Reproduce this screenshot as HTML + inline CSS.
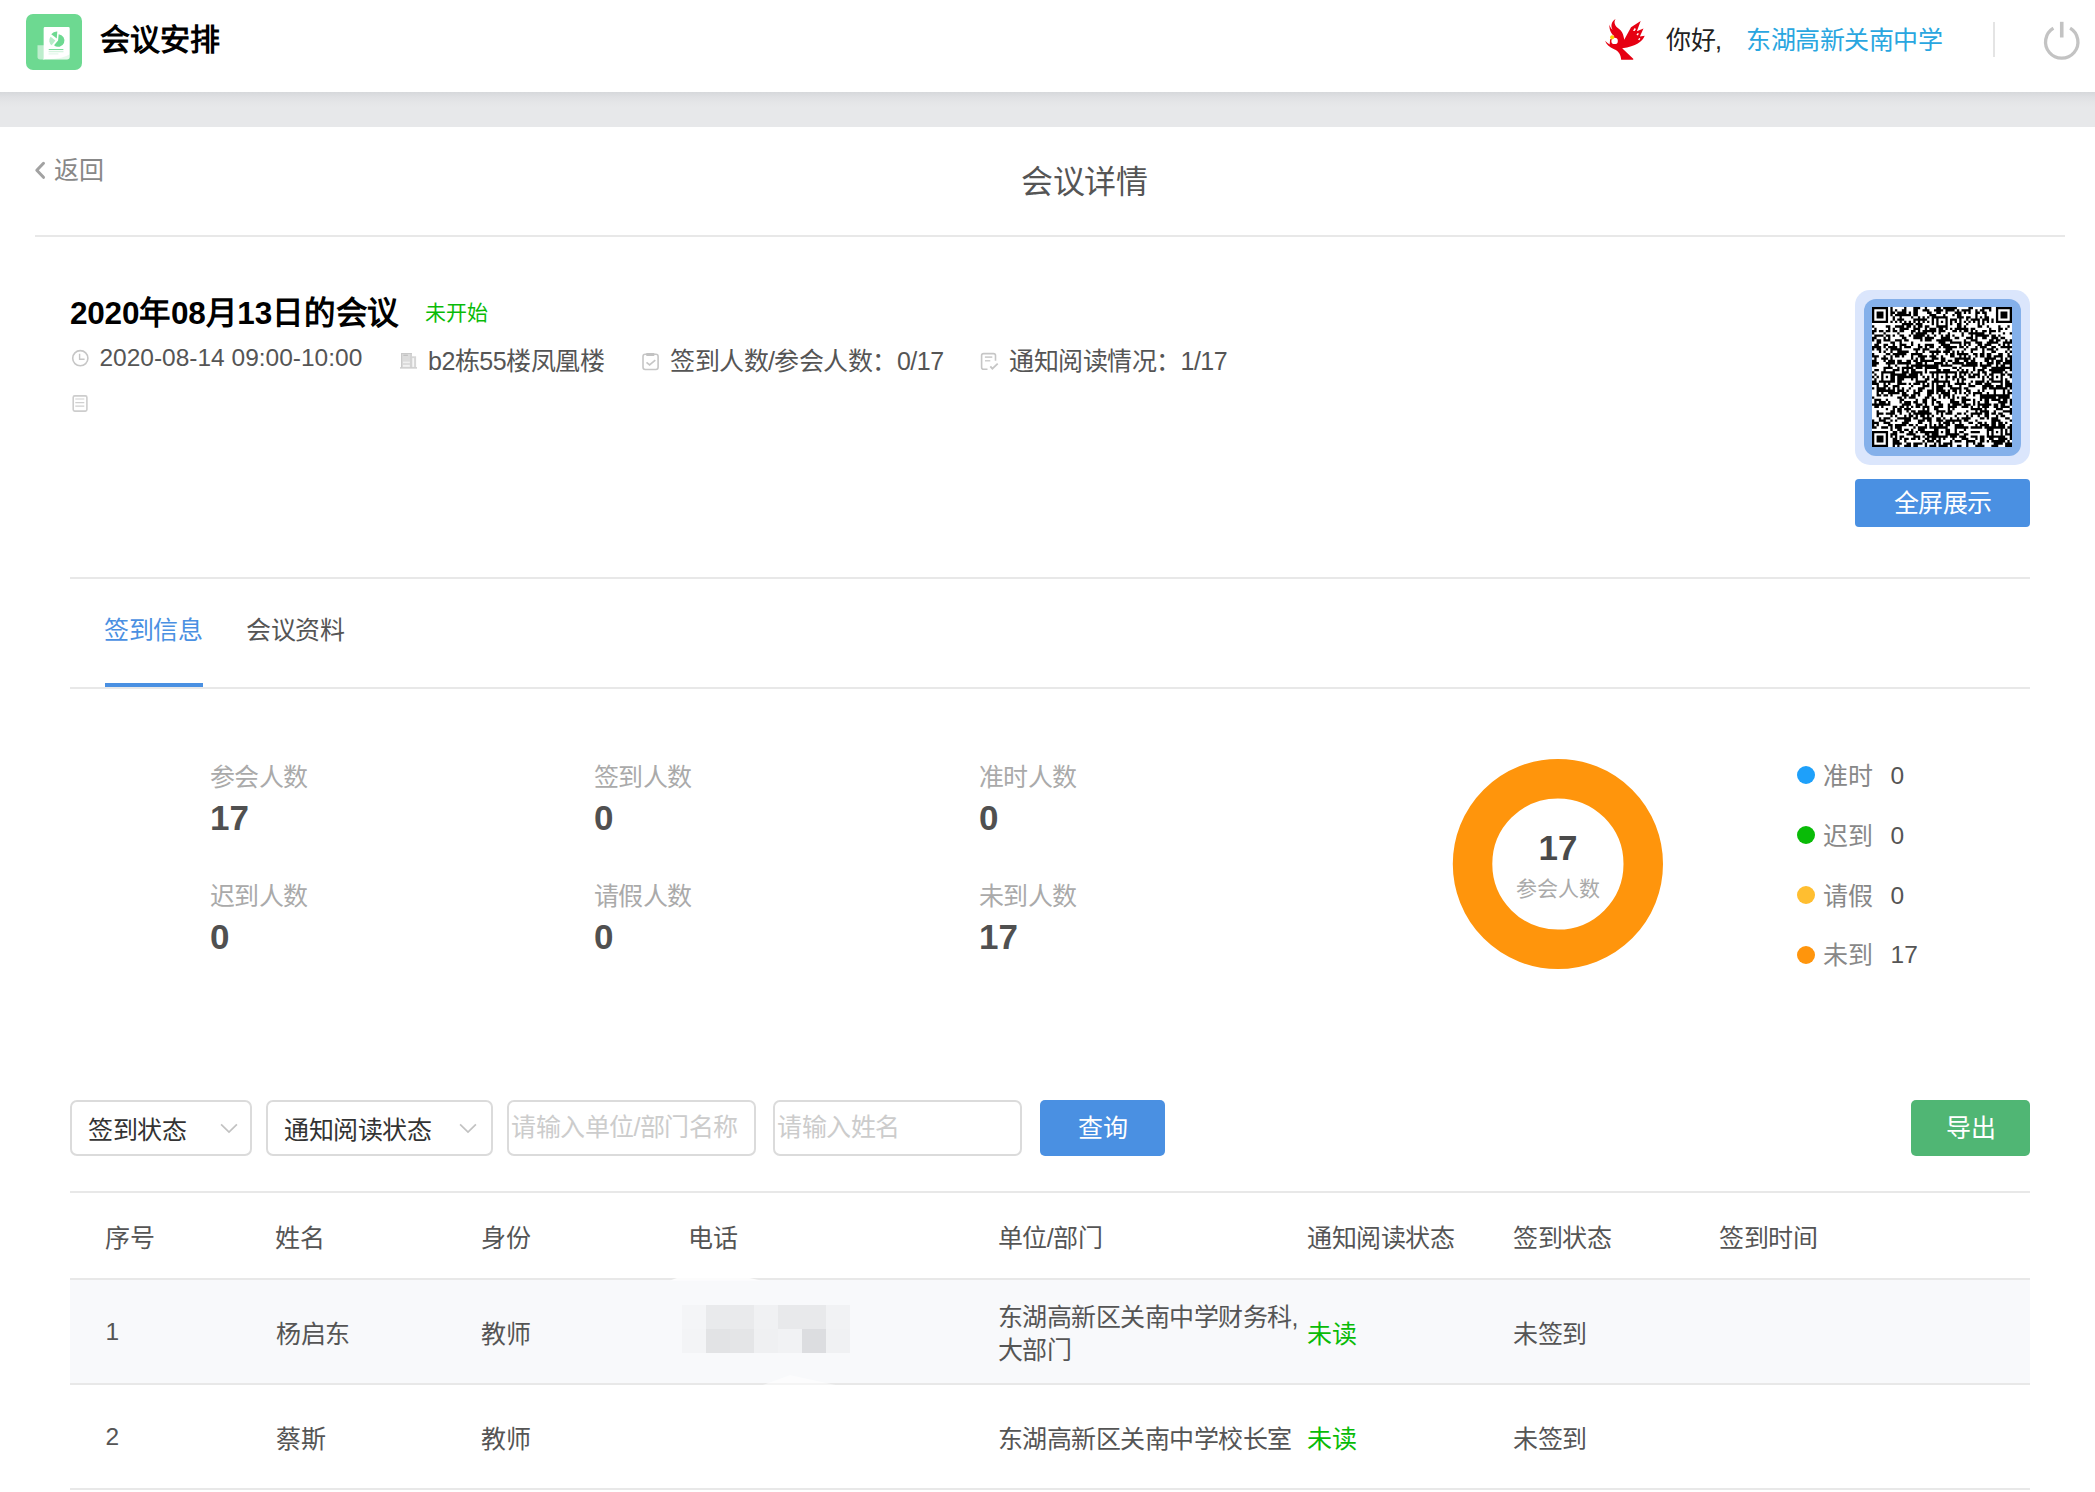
<!DOCTYPE html>
<html lang="zh-CN">
<head>
<meta charset="utf-8">
<title>会议详情</title>
<style>
*{box-sizing:border-box;margin:0;padding:0}
html,body{width:2095px;height:1492px;overflow:hidden;background:#fff}
body{position:relative;font-family:"Liberation Sans",sans-serif;font-size:25px;letter-spacing:-.5px;color:#555;-webkit-font-smoothing:antialiased}
.a{position:absolute;white-space:nowrap}
.t{position:absolute;white-space:nowrap;line-height:32px;height:32px}
.n{font-size:24.5px!important;letter-spacing:0!important}
.hl{position:absolute;height:2px;background:#e8e8e8}
/* header */
#hdr{left:0;top:0;width:2095px;height:92px;background:#fff}
#band{left:0;top:92px;width:2095px;height:35px;background:linear-gradient(#d6d8db 0,#dfe0e3 5px,#e5e6e8 11px,#e7e8ea 16px,#e7e8ea 100%)}
#logo{left:26px;top:14px;width:56px;height:56px;border-radius:7px;background:#6dd991}
#apptitle{left:100px;top:22px;font-size:30px;letter-spacing:0;font-weight:bold;color:#000;line-height:36px;height:36px}
#hello{left:1666px;top:24px;font-size:25px;color:#222}
#school{left:1746px;top:24px;font-size:25px;color:#29a6e0}
#vdiv{left:1993px;top:22px;width:2px;height:35px;background:#e4e4e4}
/* sub header */
#back{left:54px;top:154px;font-size:25px;color:#888}
#ptitle{left:1021px;top:163px;font-size:32px;color:#555;line-height:38px;height:38px}
/* meeting info */
#mtitle{left:70px;top:294px;font-size:31.5px;letter-spacing:-.22px;font-weight:bold;color:#000;line-height:38px;height:38px}
#mstatus{left:425px;top:297px;font-size:21px;letter-spacing:0;color:#09bb07}
.info{color:#555;font-size:25px}
/* tabs */
.tab{font-size:25px}
/* stats */
.sl{color:#aaa;font-size:25px}
.sn{color:#505050;font-size:35px;letter-spacing:0;font-weight:bold;line-height:40px;height:40px}
/* legend */
.dot{position:absolute;width:18px;height:18px;border-radius:50%}
.lg{color:#888;font-size:25px}
.ln{color:#555;font-size:25px}
/* filters */
.sel,.inp{position:absolute;top:1100px;height:56px;border:2px solid #dbdbdb;border-radius:7px;background:#fff}
.btn{position:absolute;color:#fff;font-size:25px;text-align:center;border-radius:5px}
/* table */
.th{color:#555;font-size:25px}
.td{color:#555;font-size:25px}
.g{color:#09bb07}
</style>
</head>
<body>
<!-- HEADER -->
<div class="a" id="hdr"></div>
<div class="a" id="band"></div>
<div class="a" id="logo">
<svg width="56" height="56" viewBox="0 0 56 56">
<path d="M11.500 31.300h7v14.200h-4.300a2.700 2.700 0 0 1-2.700-2.700z" fill="#fff" fill-opacity=".55"/>
<path d="M19 13h23.300a1.400 1.400 0 0 1 1.400 1.400V42.800a2.700 2.700 0 0 1-2.700 2.700H16.500c.8-.2 1.150-.7 1.150-1.800V14.400A1.400 1.400 0 0 1 19 13z" fill="#fff"/>
<path d="M43.700 40.200V42.800a2.700 2.700 0 0 1-2.700 2.700H17c12-.3 21-1.700 26.700-5.300z" fill="#6dd991" fill-opacity=".16"/>
<path d="M32.10 26.50L32.65 20.17A6.35 6.35 0 1 1 28.02 31.36Z" fill="#6dd991"/>
<path d="M30.80 24.60L25.28 20.29A7.0 7.0 0 0 1 31.29 17.62Z" fill="#6dd991"/>
<path d="M29.40 26.50L25.64 31.31A6.1 6.1 0 0 1 24.59 22.74Z" fill="#6dd991" fill-opacity=".5"/>
<rect x="22.600" y="34.900" width="14.900" height="1.200" rx=".6" fill="#6dd991" fill-opacity=".9"/>
<rect x="22.600" y="36.800" width="14.900" height="1.500" fill="#6dd991" fill-opacity=".28"/>
<rect x="22.600" y="39.100" width="9.800" height="1.500" fill="#6dd991" fill-opacity=".15"/>
</svg>
</div>
<div class="t" id="apptitle">会议安排</div>
<svg class="a" style="left:1590px;top:10px" width="80" height="60" viewBox="0 0 1989 1492">
<path fill="#e60012" d="M635 225C585 300 615 390 700 455C790 520 835 600 850 740L1020 430L1260 275L1165 530L1330 460L1240 660L1360 640C1300 790 1150 905 800 950L1075 1215V1240H775C770 1120 720 1020 600 975C480 930 400 850 375 765C420 810 455 840 488 858L500 735L605 650C540 600 480 520 480 360C500 420 520 460 560 490C510 400 530 290 635 225Z"/>
<circle cx="612" cy="768" r="80" fill="#fff"/>
<circle cx="552" cy="680" r="52" fill="#ffd200"/>
<path fill="#fff" d="M1112 448L1142 470L1112 522L1068 515ZM1190 570L1216 590L1186 636L1154 610ZM1226 694L1252 710L1226 752L1194 735Z"/>
</svg>
<div class="t" id="hello">你好,</div>
<div class="t" id="school">东湖高新关南中学</div>
<div class="a" id="vdiv"></div>
<svg class="a" style="left:2040px;top:18px" width="44" height="44" viewBox="0 0 44 44" fill="none" stroke="#c3c3c3">
<path d="M30.100 10.100A16.200 16.200 0 1 1 13.400 10.100" stroke-width="3.300"/>
<path d="M21.750 3.800V19.500" stroke-width="3.600"/>
</svg>

<!-- SUBHEADER -->
<svg class="a" style="left:30px;top:156px" width="20" height="28" viewBox="30 156 20 28" fill="none" stroke="#a2a2a2" stroke-width="3" stroke-linecap="round" stroke-linejoin="round"><path d="M43.500 163.300L36.800 170.300L43.500 177.300"/></svg>
<div class="t" id="back">返回</div>
<div class="t" id="ptitle">会议详情</div>
<div class="hl" style="left:35px;top:235px;width:2030px"></div>

<!-- MEETING INFO -->
<div class="t" id="mtitle">2020年08月13日的会议</div>
<div class="t" id="mstatus">未开始</div>
<svg class="a" style="left:60px;top:340px" width="960" height="80" viewBox="60 340 960 80" fill="none" stroke="#c6c6c6" stroke-width="1.600">
<circle cx="80.300" cy="358.200" r="7.600"/>
<path d="M79.600 353.800V359.300H84.600" stroke-width="1.400"/>
<g stroke="none" fill="#c9c9c9">
<rect x="401" y="353" width="10.700" height="14.300" fill="#dcdcdc"/>
<rect x="401" y="353" width="1.200" height="14.300"/>
<rect x="410.500" y="353" width="1.200" height="14.300"/>
<rect x="401" y="353" width="10.700" height="1"/>
<rect x="403.300" y="354.700" width="4.600" height="1.100" fill="#bbb"/>
<rect x="403" y="361.700" width="6.800" height="1.100" fill="#f4f4f4"/>
<rect x="403" y="365.100" width="6.800" height="1.600" fill="#f4f4f4"/>
<rect x="411.700" y="356.300" width="4.400" height="11" fill="#d6d6d6"/>
<rect x="412.300" y="358.100" width="1.800" height="8.800" fill="#f6f6f6"/>
<rect x="400" y="367.300" width="17" height="1.200" fill="#c2c2c2"/>
</g>
<rect x="643" y="354.200" width="15.100" height="15.300" rx="2.200"/>
<path d="M646.300 354.500H654.300" stroke-width="3" stroke="#c2c2c2"/>
<path d="M646.500 362.300L649.600 364.800L655.300 360.200" stroke-width="1.700"/>
<path d="M995.500 360.700V355.600A2 2 0 0 0 993.500 353.600H983.600A2 2 0 0 0 981.600 355.600V367.300A2 2 0 0 0 983.600 369.300H987.500"/>
<path d="M984.900 357.100H992.300M985 360.700H990.300" stroke="#d0d0d0"/>
<path d="M990.300 366.300L992.400 368.600L997.700 363.700" stroke-width="1.800"/>
<rect x="73.200" y="395.900" width="13.700" height="15.200" rx="1.500" stroke="#cdcdcd"/>
<path d="M75.300 399H84.300M75.300 402.600H84.300M75.300 406.100H84.300" stroke-width="1.100" stroke="#d0d0d0"/>
</svg>
<div class="t info n" style="left:99.400px;top:342px">2020-08-14 09:00-10:00</div>
<div class="t info" style="left:428px;top:345px">b2栋55楼凤凰楼</div>
<div class="t info" style="left:670px;top:345px">签到人数/参会人数：0/17</div>
<div class="t info" style="left:1009px;top:345px">通知阅读情况：1/17</div>
<div class="a" style="left:1855px;top:290px;width:175px;height:175px;border-radius:15px;background:#dbe6fc"></div>
<div class="a" style="left:1864px;top:299px;width:157px;height:157px;border-radius:12px;background:#84b0ea"></div>
<svg class="a" style="left:1872px;top:307px;background:#fff" width="140" height="140" viewBox="0 0 61 61"><path fill="#000" d="M0 0h7v1h-7zM8 0h1v1h-1zM14 0h1v1h-1zM18 0h3v1h-3zM23 0h1v1h-1zM28 0h2v1h-2zM31 0h6v1h-6zM42 0h2v1h-2zM48 0h4v1h-4zM54 0h7v1h-7zM0 1h1v1h-1zM6 1h1v1h-1zM8 1h1v1h-1zM10 1h1v1h-1zM13 1h2v1h-2zM18 1h2v1h-2zM22 1h3v1h-3zM27 1h4v1h-4zM32 1h4v1h-4zM37 1h1v1h-1zM39 1h4v1h-4zM45 1h1v1h-1zM47 1h2v1h-2zM51 1h1v1h-1zM54 1h1v1h-1zM60 1h1v1h-1zM0 2h1v1h-1zM2 2h3v1h-3zM6 2h1v1h-1zM8 2h2v1h-2zM11 2h4v1h-4zM16 2h1v1h-1zM18 2h2v1h-2zM24 2h2v1h-2zM28 2h2v1h-2zM32 2h1v1h-1zM36 2h3v1h-3zM40 2h1v1h-1zM42 2h1v1h-1zM45 2h2v1h-2zM48 2h2v1h-2zM54 2h1v1h-1zM56 2h3v1h-3zM60 2h1v1h-1zM0 3h1v1h-1zM2 3h3v1h-3zM6 3h1v1h-1zM8 3h1v1h-1zM10 3h7v1h-7zM18 3h2v1h-2zM25 3h3v1h-3zM31 3h1v1h-1zM35 3h1v1h-1zM37 3h2v1h-2zM45 3h1v1h-1zM49 3h1v1h-1zM54 3h1v1h-1zM56 3h3v1h-3zM60 3h1v1h-1zM0 4h1v1h-1zM2 4h3v1h-3zM6 4h1v1h-1zM9 4h1v1h-1zM12 4h1v1h-1zM17 4h1v1h-1zM20 4h1v1h-1zM22 4h1v1h-1zM24 4h1v1h-1zM26 4h7v1h-7zM37 4h3v1h-3zM41 4h2v1h-2zM45 4h1v1h-1zM47 4h1v1h-1zM49 4h2v1h-2zM54 4h1v1h-1zM56 4h3v1h-3zM60 4h1v1h-1zM0 5h1v1h-1zM6 5h1v1h-1zM9 5h1v1h-1zM11 5h3v1h-3zM18 5h6v1h-6zM26 5h1v1h-1zM28 5h1v1h-1zM32 5h1v1h-1zM34 5h3v1h-3zM38 5h1v1h-1zM41 5h1v1h-1zM43 5h4v1h-4zM48 5h3v1h-3zM52 5h1v1h-1zM54 5h1v1h-1zM60 5h1v1h-1zM0 6h7v1h-7zM8 6h1v1h-1zM10 6h1v1h-1zM12 6h1v1h-1zM14 6h1v1h-1zM16 6h1v1h-1zM18 6h1v1h-1zM20 6h1v1h-1zM22 6h1v1h-1zM24 6h1v1h-1zM26 6h1v1h-1zM28 6h1v1h-1zM30 6h1v1h-1zM32 6h1v1h-1zM34 6h1v1h-1zM36 6h1v1h-1zM38 6h1v1h-1zM40 6h1v1h-1zM42 6h1v1h-1zM44 6h1v1h-1zM46 6h1v1h-1zM48 6h1v1h-1zM50 6h1v1h-1zM52 6h1v1h-1zM54 6h7v1h-7zM13 7h5v1h-5zM19 7h3v1h-3zM26 7h1v1h-1zM28 7h1v1h-1zM32 7h1v1h-1zM34 7h1v1h-1zM37 7h2v1h-2zM41 7h1v1h-1zM46 7h1v1h-1zM48 7h1v1h-1zM0 8h1v1h-1zM6 8h2v1h-2zM10 8h4v1h-4zM15 8h2v1h-2zM18 8h1v1h-1zM20 8h2v1h-2zM23 8h2v1h-2zM28 8h5v1h-5zM37 8h2v1h-2zM40 8h1v1h-1zM46 8h2v1h-2zM50 8h1v1h-1zM55 8h1v1h-1zM59 8h1v1h-1zM1 9h1v1h-1zM7 9h1v1h-1zM9 9h1v1h-1zM12 9h4v1h-4zM18 9h3v1h-3zM23 9h1v1h-1zM25 9h3v1h-3zM29 9h2v1h-2zM32 9h1v1h-1zM34 9h1v1h-1zM36 9h6v1h-6zM43 9h2v1h-2zM51 9h1v1h-1zM55 9h2v1h-2zM58 9h1v1h-1zM0 10h2v1h-2zM3 10h2v1h-2zM6 10h2v1h-2zM9 10h2v1h-2zM12 10h2v1h-2zM17 10h2v1h-2zM20 10h1v1h-1zM22 10h6v1h-6zM29 10h3v1h-3zM35 10h2v1h-2zM38 10h1v1h-1zM40 10h2v1h-2zM43 10h1v1h-1zM45 10h1v1h-1zM48 10h2v1h-2zM51 10h3v1h-3zM55 10h1v1h-1zM0 11h1v1h-1zM5 11h1v1h-1zM11 11h1v1h-1zM17 11h1v1h-1zM19 11h5v1h-5zM26 11h1v1h-1zM29 11h1v1h-1zM33 11h1v1h-1zM39 11h1v1h-1zM42 11h7v1h-7zM51 11h1v1h-1zM57 11h1v1h-1zM60 11h1v1h-1zM1 12h4v1h-4zM6 12h2v1h-2zM9 12h1v1h-1zM12 12h2v1h-2zM16 12h1v1h-1zM18 12h5v1h-5zM24 12h1v1h-1zM27 12h1v1h-1zM30 12h1v1h-1zM32 12h2v1h-2zM35 12h1v1h-1zM39 12h1v1h-1zM43 12h1v1h-1zM45 12h6v1h-6zM52 12h2v1h-2zM55 12h1v1h-1zM0 13h2v1h-2zM5 13h1v1h-1zM7 13h1v1h-1zM13 13h2v1h-2zM18 13h4v1h-4zM23 13h4v1h-4zM30 13h4v1h-4zM36 13h2v1h-2zM41 13h3v1h-3zM45 13h1v1h-1zM48 13h2v1h-2zM52 13h3v1h-3zM56 13h2v1h-2zM0 14h1v1h-1zM2 14h2v1h-2zM5 14h3v1h-3zM10 14h3v1h-3zM14 14h2v1h-2zM21 14h1v1h-1zM23 14h3v1h-3zM28 14h7v1h-7zM40 14h1v1h-1zM43 14h3v1h-3zM51 14h2v1h-2zM54 14h2v1h-2zM58 14h1v1h-1zM60 14h1v1h-1zM2 15h2v1h-2zM8 15h2v1h-2zM12 15h1v1h-1zM17 15h1v1h-1zM29 15h3v1h-3zM34 15h5v1h-5zM40 15h3v1h-3zM45 15h3v1h-3zM50 15h5v1h-5zM57 15h4v1h-4zM1 16h2v1h-2zM5 16h2v1h-2zM9 16h1v1h-1zM12 16h3v1h-3zM17 16h1v1h-1zM20 16h1v1h-1zM23 16h4v1h-4zM30 16h4v1h-4zM38 16h1v1h-1zM40 16h1v1h-1zM42 16h1v1h-1zM46 16h2v1h-2zM49 16h3v1h-3zM55 16h1v1h-1zM57 16h1v1h-1zM59 16h1v1h-1zM0 17h4v1h-4zM5 17h1v1h-1zM7 17h4v1h-4zM12 17h1v1h-1zM14 17h3v1h-3zM20 17h2v1h-2zM23 17h1v1h-1zM25 17h2v1h-2zM29 17h1v1h-1zM31 17h6v1h-6zM38 17h2v1h-2zM41 17h1v1h-1zM45 17h1v1h-1zM47 17h3v1h-3zM52 17h2v1h-2zM56 17h5v1h-5zM0 18h1v1h-1zM2 18h2v1h-2zM6 18h1v1h-1zM8 18h5v1h-5zM18 18h3v1h-3zM22 18h3v1h-3zM28 18h1v1h-1zM32 18h3v1h-3zM40 18h1v1h-1zM43 18h3v1h-3zM48 18h1v1h-1zM50 18h3v1h-3zM54 18h1v1h-1zM59 18h1v1h-1zM3 19h1v1h-1zM5 19h1v1h-1zM8 19h1v1h-1zM11 19h5v1h-5zM19 19h1v1h-1zM22 19h1v1h-1zM25 19h5v1h-5zM31 19h3v1h-3zM35 19h1v1h-1zM37 19h1v1h-1zM39 19h1v1h-1zM43 19h1v1h-1zM48 19h1v1h-1zM52 19h2v1h-2zM58 19h1v1h-1zM60 19h1v1h-1zM0 20h1v1h-1zM6 20h2v1h-2zM9 20h6v1h-6zM17 20h5v1h-5zM26 20h1v1h-1zM28 20h1v1h-1zM32 20h1v1h-1zM34 20h2v1h-2zM37 20h5v1h-5zM44 20h2v1h-2zM47 20h2v1h-2zM50 20h2v1h-2zM55 20h2v1h-2zM59 20h1v1h-1zM0 21h3v1h-3zM5 21h1v1h-1zM8 21h1v1h-1zM10 21h2v1h-2zM13 21h1v1h-1zM17 21h1v1h-1zM20 21h4v1h-4zM25 21h3v1h-3zM30 21h1v1h-1zM34 21h2v1h-2zM38 21h1v1h-1zM40 21h1v1h-1zM42 21h1v1h-1zM45 21h1v1h-1zM47 21h2v1h-2zM50 21h2v1h-2zM53 21h4v1h-4zM59 21h2v1h-2zM1 22h1v1h-1zM4 22h3v1h-3zM8 22h1v1h-1zM17 22h1v1h-1zM19 22h1v1h-1zM21 22h2v1h-2zM26 22h3v1h-3zM30 22h2v1h-2zM36 22h7v1h-7zM44 22h1v1h-1zM49 22h5v1h-5zM56 22h1v1h-1zM58 22h1v1h-1zM60 22h1v1h-1zM0 23h2v1h-2zM5 23h1v1h-1zM7 23h3v1h-3zM11 23h2v1h-2zM15 23h2v1h-2zM18 23h2v1h-2zM21 23h6v1h-6zM30 23h2v1h-2zM33 23h2v1h-2zM36 23h2v1h-2zM40 23h2v1h-2zM43 23h2v1h-2zM49 23h2v1h-2zM52 23h1v1h-1zM54 23h3v1h-3zM58 23h3v1h-3zM0 24h3v1h-3zM6 24h4v1h-4zM11 24h6v1h-6zM19 24h3v1h-3zM23 24h1v1h-1zM27 24h4v1h-4zM32 24h1v1h-1zM35 24h5v1h-5zM41 24h5v1h-5zM47 24h1v1h-1zM50 24h3v1h-3zM54 24h2v1h-2zM57 24h4v1h-4zM0 25h2v1h-2zM7 25h1v1h-1zM10 25h1v1h-1zM15 25h1v1h-1zM17 25h12v1h-12zM30 25h5v1h-5zM39 25h7v1h-7zM47 25h5v1h-5zM54 25h1v1h-1zM56 25h2v1h-2zM60 25h1v1h-1zM5 26h4v1h-4zM11 26h1v1h-1zM13 26h5v1h-5zM19 26h3v1h-3zM23 26h6v1h-6zM35 26h2v1h-2zM38 26h1v1h-1zM44 26h1v1h-1zM48 26h2v1h-2zM52 26h9v1h-9zM1 27h2v1h-2zM5 27h1v1h-1zM9 27h3v1h-3zM13 27h1v1h-1zM15 27h1v1h-1zM17 27h2v1h-2zM23 27h1v1h-1zM28 27h2v1h-2zM31 27h3v1h-3zM37 27h1v1h-1zM39 27h1v1h-1zM41 27h1v1h-1zM44 27h1v1h-1zM46 27h3v1h-3zM51 27h7v1h-7zM60 27h1v1h-1zM0 28h1v1h-1zM4 28h6v1h-6zM13 28h3v1h-3zM17 28h5v1h-5zM23 28h1v1h-1zM25 28h12v1h-12zM38 28h4v1h-4zM43 28h1v1h-1zM46 28h1v1h-1zM48 28h2v1h-2zM52 28h5v1h-5zM58 28h1v1h-1zM1 29h1v1h-1zM4 29h1v1h-1zM8 29h7v1h-7zM16 29h4v1h-4zM21 29h1v1h-1zM26 29h1v1h-1zM28 29h1v1h-1zM32 29h1v1h-1zM36 29h1v1h-1zM38 29h1v1h-1zM40 29h1v1h-1zM42 29h1v1h-1zM44 29h3v1h-3zM49 29h1v1h-1zM51 29h2v1h-2zM56 29h2v1h-2zM59 29h2v1h-2zM0 30h1v1h-1zM2 30h1v1h-1zM4 30h1v1h-1zM6 30h1v1h-1zM8 30h2v1h-2zM11 30h9v1h-9zM22 30h1v1h-1zM24 30h1v1h-1zM26 30h1v1h-1zM28 30h1v1h-1zM30 30h1v1h-1zM32 30h2v1h-2zM35 30h2v1h-2zM38 30h2v1h-2zM42 30h3v1h-3zM46 30h1v1h-1zM48 30h1v1h-1zM50 30h1v1h-1zM52 30h1v1h-1zM54 30h1v1h-1zM56 30h1v1h-1zM60 30h1v1h-1zM1 31h1v1h-1zM4 31h1v1h-1zM8 31h2v1h-2zM11 31h3v1h-3zM17 31h1v1h-1zM19 31h1v1h-1zM23 31h2v1h-2zM27 31h2v1h-2zM32 31h1v1h-1zM35 31h1v1h-1zM37 31h1v1h-1zM39 31h2v1h-2zM48 31h1v1h-1zM51 31h2v1h-2zM56 31h1v1h-1zM58 31h1v1h-1zM0 32h2v1h-2zM3 32h7v1h-7zM11 32h2v1h-2zM19 32h5v1h-5zM26 32h8v1h-8zM37 32h1v1h-1zM39 32h1v1h-1zM43 32h1v1h-1zM45 32h4v1h-4zM50 32h1v1h-1zM52 32h5v1h-5zM58 32h2v1h-2zM0 33h3v1h-3zM5 33h1v1h-1zM7 33h1v1h-1zM11 33h4v1h-4zM16 33h1v1h-1zM18 33h3v1h-3zM22 33h1v1h-1zM24 33h1v1h-1zM26 33h1v1h-1zM28 33h1v1h-1zM31 33h1v1h-1zM33 33h1v1h-1zM36 33h5v1h-5zM42 33h1v1h-1zM45 33h3v1h-3zM49 33h3v1h-3zM56 33h1v1h-1zM58 33h3v1h-3zM2 34h1v1h-1zM5 34h2v1h-2zM9 34h3v1h-3zM17 34h1v1h-1zM22 34h3v1h-3zM26 34h1v1h-1zM28 34h4v1h-4zM33 34h2v1h-2zM38 34h1v1h-1zM42 34h3v1h-3zM48 34h5v1h-5zM54 34h3v1h-3zM58 34h3v1h-3zM0 35h1v1h-1zM2 35h4v1h-4zM7 35h1v1h-1zM9 35h1v1h-1zM11 35h1v1h-1zM13 35h1v1h-1zM16 35h1v1h-1zM20 35h3v1h-3zM26 35h1v1h-1zM28 35h3v1h-3zM34 35h5v1h-5zM40 35h2v1h-2zM48 35h2v1h-2zM51 35h8v1h-8zM60 35h1v1h-1zM2 36h8v1h-8zM11 36h3v1h-3zM15 36h1v1h-1zM18 36h1v1h-1zM20 36h2v1h-2zM24 36h3v1h-3zM28 36h4v1h-4zM33 36h1v1h-1zM35 36h2v1h-2zM38 36h1v1h-1zM41 36h2v1h-2zM46 36h1v1h-1zM48 36h1v1h-1zM53 36h1v1h-1zM57 36h1v1h-1zM59 36h1v1h-1zM2 37h1v1h-1zM4 37h1v1h-1zM7 37h5v1h-5zM13 37h2v1h-2zM18 37h3v1h-3zM24 37h3v1h-3zM28 37h1v1h-1zM30 37h4v1h-4zM36 37h1v1h-1zM38 37h1v1h-1zM40 37h1v1h-1zM42 37h1v1h-1zM44 37h4v1h-4zM50 37h1v1h-1zM53 37h1v1h-1zM57 37h1v1h-1zM59 37h2v1h-2zM2 38h2v1h-2zM5 38h2v1h-2zM8 38h1v1h-1zM13 38h3v1h-3zM17 38h2v1h-2zM20 38h1v1h-1zM24 38h2v1h-2zM29 38h1v1h-1zM31 38h3v1h-3zM35 38h1v1h-1zM41 38h1v1h-1zM44 38h1v1h-1zM47 38h13v1h-13zM0 39h1v1h-1zM11 39h2v1h-2zM14 39h1v1h-1zM16 39h3v1h-3zM23 39h2v1h-2zM26 39h1v1h-1zM29 39h1v1h-1zM31 39h1v1h-1zM33 39h1v1h-1zM35 39h1v1h-1zM37 39h1v1h-1zM39 39h2v1h-2zM47 39h7v1h-7zM55 39h5v1h-5zM1 40h3v1h-3zM6 40h1v1h-1zM12 40h2v1h-2zM19 40h1v1h-1zM22 40h2v1h-2zM26 40h2v1h-2zM34 40h2v1h-2zM39 40h4v1h-4zM44 40h1v1h-1zM47 40h1v1h-1zM49 40h2v1h-2zM52 40h4v1h-4zM57 40h2v1h-2zM60 40h1v1h-1zM1 41h1v1h-1zM3 41h3v1h-3zM7 41h1v1h-1zM12 41h1v1h-1zM14 41h3v1h-3zM18 41h2v1h-2zM22 41h2v1h-2zM26 41h1v1h-1zM28 41h2v1h-2zM34 41h4v1h-4zM39 41h2v1h-2zM44 41h1v1h-1zM46 41h1v1h-1zM49 41h2v1h-2zM55 41h4v1h-4zM60 41h1v1h-1zM0 42h8v1h-8zM13 42h4v1h-4zM19 42h3v1h-3zM23 42h1v1h-1zM26 42h1v1h-1zM29 42h2v1h-2zM33 42h1v1h-1zM35 42h4v1h-4zM40 42h3v1h-3zM44 42h1v1h-1zM46 42h6v1h-6zM53 42h2v1h-2zM56 42h2v1h-2zM60 42h1v1h-1zM1 43h2v1h-2zM4 43h1v1h-1zM9 43h2v1h-2zM12 43h2v1h-2zM15 43h1v1h-1zM17 43h1v1h-1zM19 43h2v1h-2zM22 43h3v1h-3zM27 43h4v1h-4zM33 43h4v1h-4zM39 43h3v1h-3zM43 43h1v1h-1zM46 43h1v1h-1zM48 43h3v1h-3zM53 43h2v1h-2zM56 43h4v1h-4zM6 44h1v1h-1zM9 44h1v1h-1zM11 44h2v1h-2zM14 44h3v1h-3zM22 44h1v1h-1zM24 44h1v1h-1zM27 44h2v1h-2zM33 44h1v1h-1zM35 44h1v1h-1zM43 44h5v1h-5zM49 44h1v1h-1zM54 44h3v1h-3zM60 44h1v1h-1zM2 45h1v1h-1zM8 45h2v1h-2zM11 45h2v1h-2zM15 45h1v1h-1zM17 45h2v1h-2zM20 45h5v1h-5zM28 45h4v1h-4zM33 45h2v1h-2zM41 45h1v1h-1zM45 45h1v1h-1zM47 45h4v1h-4zM53 45h1v1h-1zM57 45h4v1h-4zM2 46h3v1h-3zM6 46h4v1h-4zM12 46h1v1h-1zM16 46h1v1h-1zM18 46h8v1h-8zM28 46h1v1h-1zM30 46h1v1h-1zM32 46h3v1h-3zM37 46h2v1h-2zM40 46h1v1h-1zM43 46h5v1h-5zM49 46h2v1h-2zM52 46h2v1h-2zM55 46h2v1h-2zM60 46h1v1h-1zM2 47h1v1h-1zM8 47h1v1h-1zM10 47h1v1h-1zM14 47h1v1h-1zM16 47h2v1h-2zM19 47h1v1h-1zM21 47h2v1h-2zM24 47h1v1h-1zM26 47h1v1h-1zM30 47h1v1h-1zM36 47h1v1h-1zM41 47h1v1h-1zM43 47h1v1h-1zM46 47h1v1h-1zM49 47h2v1h-2zM54 47h1v1h-1zM56 47h2v1h-2zM3 48h1v1h-1zM5 48h3v1h-3zM11 48h6v1h-6zM18 48h2v1h-2zM22 48h4v1h-4zM28 48h2v1h-2zM31 48h1v1h-1zM34 48h1v1h-1zM37 48h1v1h-1zM39 48h4v1h-4zM47 48h2v1h-2zM50 48h1v1h-1zM52 48h3v1h-3zM58 48h2v1h-2zM0 49h1v1h-1zM3 49h3v1h-3zM8 49h1v1h-1zM10 49h1v1h-1zM14 49h3v1h-3zM20 49h3v1h-3zM24 49h2v1h-2zM28 49h3v1h-3zM32 49h7v1h-7zM40 49h2v1h-2zM45 49h1v1h-1zM52 49h4v1h-4zM60 49h1v1h-1zM0 50h3v1h-3zM5 50h3v1h-3zM13 50h3v1h-3zM20 50h2v1h-2zM25 50h1v1h-1zM29 50h1v1h-1zM31 50h3v1h-3zM35 50h1v1h-1zM38 50h1v1h-1zM42 50h2v1h-2zM46 50h2v1h-2zM49 50h1v1h-1zM52 50h2v1h-2zM55 50h2v1h-2zM58 50h1v1h-1zM0 51h1v1h-1zM2 51h1v1h-1zM7 51h2v1h-2zM10 51h5v1h-5zM16 51h2v1h-2zM19 51h1v1h-1zM23 51h1v1h-1zM25 51h1v1h-1zM27 51h1v1h-1zM29 51h2v1h-2zM32 51h2v1h-2zM36 51h4v1h-4zM45 51h1v1h-1zM47 51h4v1h-4zM52 51h2v1h-2zM55 51h3v1h-3zM60 51h1v1h-1zM0 52h2v1h-2zM4 52h3v1h-3zM8 52h1v1h-1zM10 52h3v1h-3zM18 52h1v1h-1zM20 52h4v1h-4zM25 52h8v1h-8zM36 52h6v1h-6zM43 52h5v1h-5zM49 52h9v1h-9zM59 52h2v1h-2zM8 53h1v1h-1zM11 53h2v1h-2zM14 53h2v1h-2zM17 53h1v1h-1zM20 53h3v1h-3zM27 53h2v1h-2zM32 53h2v1h-2zM36 53h1v1h-1zM40 53h1v1h-1zM50 53h3v1h-3zM56 53h1v1h-1zM58 53h1v1h-1zM60 53h1v1h-1zM0 54h7v1h-7zM9 54h2v1h-2zM12 54h2v1h-2zM16 54h2v1h-2zM19 54h1v1h-1zM21 54h8v1h-8zM30 54h1v1h-1zM32 54h2v1h-2zM36 54h1v1h-1zM38 54h2v1h-2zM43 54h4v1h-4zM50 54h1v1h-1zM52 54h1v1h-1zM54 54h1v1h-1zM56 54h1v1h-1zM58 54h1v1h-1zM60 54h1v1h-1zM0 55h1v1h-1zM6 55h1v1h-1zM8 55h3v1h-3zM15 55h4v1h-4zM23 55h2v1h-2zM26 55h3v1h-3zM32 55h6v1h-6zM40 55h2v1h-2zM50 55h1v1h-1zM52 55h1v1h-1zM56 55h1v1h-1zM58 55h3v1h-3zM0 56h1v1h-1zM2 56h3v1h-3zM6 56h1v1h-1zM8 56h1v1h-1zM10 56h1v1h-1zM12 56h2v1h-2zM18 56h3v1h-3zM22 56h1v1h-1zM24 56h9v1h-9zM34 56h3v1h-3zM38 56h3v1h-3zM43 56h3v1h-3zM47 56h2v1h-2zM50 56h8v1h-8zM60 56h1v1h-1zM0 57h1v1h-1zM2 57h3v1h-3zM6 57h1v1h-1zM9 57h2v1h-2zM12 57h1v1h-1zM14 57h2v1h-2zM17 57h2v1h-2zM20 57h1v1h-1zM23 57h2v1h-2zM26 57h2v1h-2zM29 57h1v1h-1zM31 57h1v1h-1zM35 57h1v1h-1zM39 57h3v1h-3zM45 57h1v1h-1zM47 57h2v1h-2zM51 57h2v1h-2zM55 57h4v1h-4zM60 57h1v1h-1zM0 58h1v1h-1zM2 58h3v1h-3zM6 58h1v1h-1zM9 58h3v1h-3zM14 58h1v1h-1zM22 58h1v1h-1zM24 58h3v1h-3zM28 58h2v1h-2zM34 58h1v1h-1zM36 58h3v1h-3zM41 58h4v1h-4zM47 58h2v1h-2zM50 58h1v1h-1zM52 58h6v1h-6zM59 58h1v1h-1zM0 59h1v1h-1zM6 59h1v1h-1zM9 59h4v1h-4zM15 59h2v1h-2zM18 59h4v1h-4zM23 59h1v1h-1zM27 59h1v1h-1zM29 59h1v1h-1zM31 59h4v1h-4zM41 59h1v1h-1zM44 59h1v1h-1zM46 59h2v1h-2zM53 59h4v1h-4zM58 59h3v1h-3zM0 60h7v1h-7zM9 60h1v1h-1zM11 60h1v1h-1zM14 60h3v1h-3zM18 60h2v1h-2zM23 60h1v1h-1zM25 60h3v1h-3zM29 60h4v1h-4zM34 60h1v1h-1zM37 60h2v1h-2zM41 60h1v1h-1zM45 60h4v1h-4zM52 60h3v1h-3zM58 60h3v1h-3z"/></svg>
<div class="btn" style="left:1855px;top:479px;width:175px;height:48px;line-height:48px;border-radius:4px;background:#4a90e2">全屏展示</div>
<div class="hl" style="left:70px;top:577px;width:1960px"></div>

<!-- TABS -->
<div class="t tab" style="left:104px;top:614px;color:#4a90e2">签到信息</div>
<div class="t tab" style="left:246px;top:614px;color:#555">会议资料</div>
<div class="hl" style="left:70px;top:687px;width:1960px"></div>
<div class="a" style="left:105px;top:683px;width:98px;height:4px;background:#4a90e2"></div>

<!-- STATS -->
<div class="t sl" style="left:209.5px;top:760.5px">参会人数</div>
<div class="t sn" style="left:210px;top:798px">17</div>
<div class="t sl" style="left:593.5px;top:760.5px">签到人数</div>
<div class="t sn" style="left:594px;top:798px">0</div>
<div class="t sl" style="left:978.5px;top:760.5px">准时人数</div>
<div class="t sn" style="left:979px;top:798px">0</div>
<div class="t sl" style="left:209.5px;top:880px">迟到人数</div>
<div class="t sn" style="left:210px;top:917px">0</div>
<div class="t sl" style="left:593.5px;top:880px">请假人数</div>
<div class="t sn" style="left:594px;top:917px">0</div>
<div class="t sl" style="left:978.5px;top:880px">未到人数</div>
<div class="t sn" style="left:979px;top:917px">17</div>
<svg class="a" style="left:1448px;top:754px" width="220" height="220" viewBox="1448 754 220 220"><circle cx="1557.900" cy="864" r="85.350" fill="none" stroke="#ff950c" stroke-width="39.500"/></svg>
<div class="t sn" style="left:1498px;top:828px;width:120px;text-align:center;color:#4a4a4a">17</div>
<div class="t" style="left:1498px;top:873px;width:120px;text-align:center;color:#aaa;font-size:21px;letter-spacing:0">参会人数</div>
<div class="dot" style="left:1797px;top:766.4px;background:#1ea0fa"></div><div class="t lg" style="left:1823px;top:759.9px">准时</div><div class="t ln n" style="left:1890.500px;top:759.9px">0</div>
<div class="dot" style="left:1797px;top:826.0px;background:#09bb07"></div><div class="t lg" style="left:1823px;top:819.5px">迟到</div><div class="t ln n" style="left:1890.500px;top:819.5px">0</div>
<div class="dot" style="left:1797px;top:886.0px;background:#ffbe30"></div><div class="t lg" style="left:1823px;top:879.5px">请假</div><div class="t ln n" style="left:1890.500px;top:879.5px">0</div>
<div class="dot" style="left:1797px;top:945.6px;background:#ff950c"></div><div class="t lg" style="left:1823px;top:939.1px">未到</div><div class="t ln n" style="left:1890.500px;top:939.1px">17</div>


<!-- FILTERS -->
<div class="sel" style="left:70px;width:182px"><div class="t" style="left:16px;top:11.500px;color:#333">签到状态</div><svg class="a" style="right:10.8px;top:18px" width="20" height="14" viewBox="0 0 20 14" fill="none" stroke="#c2c2c2" stroke-width="1.700"><path d="M2.100 4.300L10 12.100L17.900 4.300"/></svg></div>
<div class="sel" style="left:266px;width:227px"><div class="t" style="left:16px;top:11.500px;color:#333">通知阅读状态</div><svg class="a" style="right:13.4px;top:18px" width="20" height="14" viewBox="0 0 20 14" fill="none" stroke="#c2c2c2" stroke-width="1.700"><path d="M2.100 4.300L10 12.100L17.900 4.300"/></svg></div>
<div class="inp" style="left:507px;width:249px"><div class="t" style="left:2px;top:9px;color:#ccc">请输入单位/部门名称</div></div>
<div class="inp" style="left:773px;width:249px"><div class="t" style="left:2px;top:9px;color:#ccc">请输入姓名</div></div>
<div class="btn" style="left:1040px;top:1100px;width:125px;height:56px;line-height:57px;background:#4a90e2">查询</div>
<div class="btn" style="left:1911px;top:1100px;width:119px;height:56px;line-height:57px;background:#50b674">导出</div>

<!-- TABLE -->
<div class="hl" style="left:70px;top:1191px;width:1960px"></div>
<div class="a" style="left:70px;top:1280px;width:1960px;height:103px;background:#f8f9fb"></div>
<div class="hl" style="left:70px;top:1278px;width:1960px"></div>
<div class="hl" style="left:70px;top:1383px;width:1960px"></div>
<div class="hl" style="left:70px;top:1488px;width:1960px"></div>
<div class="t th" style="left:105px;top:1222px">序号</div><div class="t th" style="left:275.3px;top:1222px">姓名</div><div class="t th" style="left:481.3px;top:1222px">身份</div><div class="t th" style="left:688.3px;top:1222px">电话</div><div class="t th" style="left:997.8px;top:1222px">单位/部门</div><div class="t th" style="left:1307.3px;top:1222px">通知阅读状态</div><div class="t th" style="left:1513.3px;top:1222px">签到状态</div><div class="t th" style="left:1719.3px;top:1222px">签到时间</div>
<div class="t td n" style="left:105.500px;top:1315.5px">1</div><div class="t td" style="left:276.300px;top:1318px">杨启东</div><div class="t td" style="left:481.3px;top:1318px">教师</div><div class="t td g" style="left:1307.3px;top:1318px">未读</div><div class="t td" style="left:1513.3px;top:1318px">未签到</div>
<div class="t td n" style="left:105.500px;top:1420.5px">2</div><div class="t td" style="left:276.300px;top:1423px">蔡斯</div><div class="t td" style="left:481.3px;top:1423px">教师</div><div class="t td" style="left:997.8px;top:1423px">东湖高新区关南中学校长室</div><div class="t td g" style="left:1307.3px;top:1423px">未读</div><div class="t td" style="left:1513.3px;top:1423px">未签到</div>
<div class="a td" style="left:997.500px;top:1301px;line-height:33px;white-space:normal;width:306px">东湖高新区关南中学财务科,<br>大部门</div>
<div class="a" style="left:681.5px;top:1305px;width:24.200px;height:24px;background:#f4f5f7"></div><div class="a" style="left:705.6px;top:1305px;width:24.200px;height:24px;background:#e9eaec"></div><div class="a" style="left:729.6px;top:1305px;width:24.200px;height:24px;background:#e9eaec"></div><div class="a" style="left:753.7px;top:1305px;width:24.200px;height:24px;background:#f0f1f3"></div><div class="a" style="left:777.8px;top:1305px;width:24.200px;height:24px;background:#e8e9eb"></div><div class="a" style="left:801.9px;top:1305px;width:24.200px;height:24px;background:#e8e9eb"></div><div class="a" style="left:825.9px;top:1305px;width:24.200px;height:24px;background:#f1f2f4"></div><div class="a" style="left:681.5px;top:1329px;width:24.200px;height:24px;background:#f3f4f6"></div><div class="a" style="left:705.6px;top:1329px;width:24.200px;height:24px;background:#e2e3e5"></div><div class="a" style="left:729.6px;top:1329px;width:24.200px;height:24px;background:#e4e5e7"></div><div class="a" style="left:753.7px;top:1329px;width:24.200px;height:24px;background:#eff0f2"></div><div class="a" style="left:777.8px;top:1329px;width:24.200px;height:24px;background:#f1f2f4"></div><div class="a" style="left:801.9px;top:1329px;width:24.200px;height:24px;background:#dcdde0"></div><div class="a" style="left:825.9px;top:1329px;width:24.200px;height:24px;background:#f0f1f3"></div>

<svg class="a" style="left:660px;top:1262px" width="190" height="126" viewBox="660 1262 190 126"><path d="M670 1280.500L704 1268L761 1280.500Z" fill="#fff" fill-opacity=".85"/><path d="M761 1385.500L790 1375L838 1385.500Z" fill="#fff" fill-opacity=".5"/></svg>
</body>
</html>
